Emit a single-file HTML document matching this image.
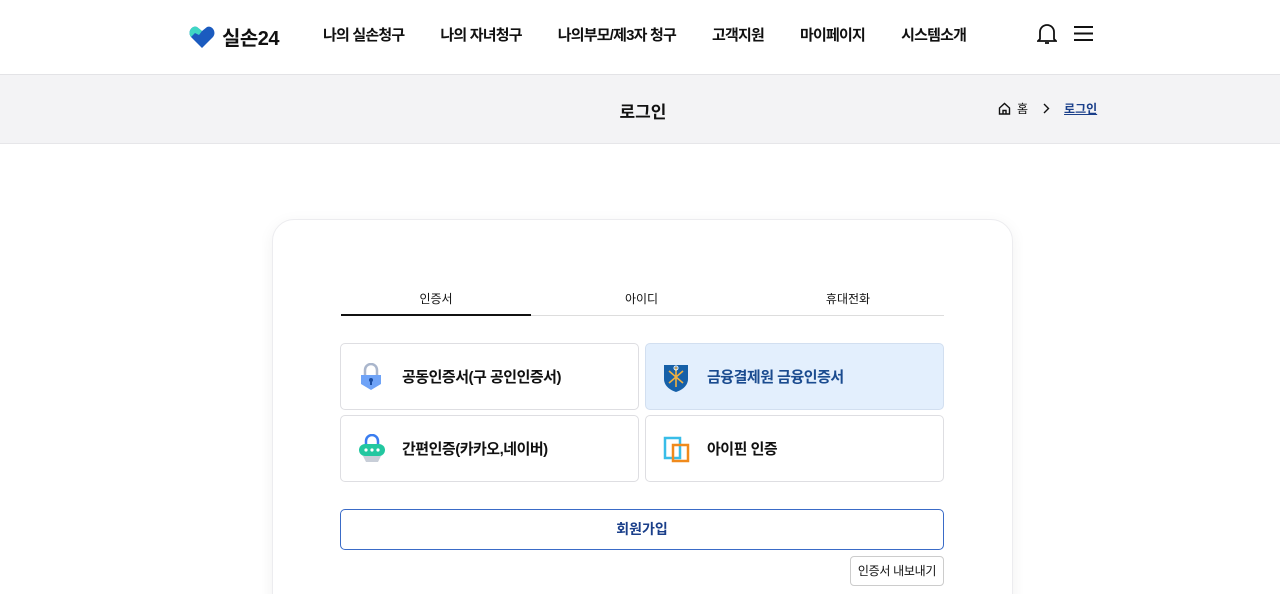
<!DOCTYPE html>
<html><head><meta charset="utf-8"><style>
*{margin:0;padding:0;box-sizing:border-box}
html,body{width:1280px;height:594px;overflow:hidden}
body{background:#fff;font-family:"Liberation Sans","Noto Sans CJK KR",sans-serif;color:#111;position:relative}
.hdr{height:75px;border-bottom:1px solid #e3e3e6;position:relative}
.logo{position:absolute;left:189px;top:22px;display:flex;align-items:center;gap:7px;font-size:20px;font-weight:700;letter-spacing:-0.5px}
.nav{position:absolute;top:24px;left:323px;font-size:15px;font-weight:700;display:flex;letter-spacing:-0.8px}
.nav span{margin-right:36px}
.sub{position:absolute;top:75px;left:0;width:1280px;height:69px;background:#f3f3f5;border-bottom:1px solid #e6e6e9}
.sub h1{position:absolute;left:3px;width:1280px;text-align:center;top:23px;font-size:17px}
.bc{position:absolute;left:998px;top:100px;font-size:12px;display:flex;align-items:center}
.clip{position:absolute;left:262px;top:209px;width:761px;height:385px;overflow:hidden}
.card{position:absolute;left:10px;top:10px;width:741px;height:420px;border:1px solid #ececef;border-radius:22px;box-shadow:0 4px 16px rgba(0,0,0,.06);background:#fff}
.tabs{position:absolute;left:341px;top:290px;width:603px;height:26px;border-bottom:1px solid #ddd;display:flex;font-size:12px}
.tabs div{text-align:center}
.tabs .on{border-bottom:2px solid #111;height:26px}
.opt{position:absolute;width:299px;height:67px;border:1px solid #dedee2;border-radius:5px;display:flex;align-items:center;padding-left:19px;font-size:15px;font-weight:700;letter-spacing:-0.5px}
.ic{width:42px;display:flex;align-items:center}
.join{position:absolute;left:340px;top:509px;width:604px;height:41px;border:1px solid #3a6bc7;border-radius:5px;text-align:center;line-height:39px;color:#1a3f8a;font-size:14px;font-weight:700}
.exp{position:absolute;left:850px;top:556px;width:94px;height:30px;border:1px solid #ccc;border-radius:4px;font-size:12px;text-align:center;line-height:28px;letter-spacing:-0.3px}
</style></head><body>
<div class="hdr">
<div class="logo"><svg width="26" height="24" viewBox="0 0 26 24"><path d="M13 23 L2 12 C-2 7 3 0 8 2 L13 6 L18 2 C23 0 28 7 24 12 Z" fill="#1b5bbf"/><path d="M2 12 C-2 7 3 0 8 2 L13 6 L10 10 L6 8 Z" fill="#3fd7c4"/></svg>실손24</div>
<div class="nav"><span>나의 실손청구</span><span>나의 자녀청구</span><span>나의부모/제3자 청구</span><span>고객지원</span><span>마이페이지</span><span>시스템소개</span></div>
<svg style="position:absolute;left:1037px;top:23px" width="20" height="22" viewBox="0 0 20 22" fill="none" stroke="#111" stroke-width="1.8"><path d="M3 16 V9 a7 7 0 0 1 14 0 V16 l2 2 H1 Z"/><path d="M8 20 h4"/></svg>
<svg style="position:absolute;left:1074px;top:26px" width="19" height="15" viewBox="0 0 19 15" stroke="#111" stroke-width="2"><path d="M0 1h19M0 7.5h19M0 14h19"/></svg>
</div>
<div class="sub"><h1>로그인</h1></div>
<div class="bc"><svg width="13" height="13" viewBox="0 0 13 13" fill="none" stroke="#111" stroke-width="1.4"><path d="M1.5 6 L6.5 1.5 L11.5 6 V12 H1.5 Z M5 12 V8.5 H8 V12"/></svg><span style="margin-left:6px">홈</span><svg style="margin-left:15px" width="7" height="11" viewBox="0 0 7 11" fill="none" stroke="#111" stroke-width="1.4"><path d="M1 1 L5.5 5.5 L1 10"/></svg><span style="margin-left:14px;color:#1a3f8a;font-weight:700;text-decoration:underline">로그인</span></div>
<div class="clip"><div class="card"></div></div>
<div class="tabs"><div class="on" style="width:190px">인증서</div><div style="width:221px">아이디</div><div style="width:192px">휴대전화</div></div>
<div class="opt" style="left:340px;top:343px"><div class="ic"><svg width="22" height="28" viewBox="0 0 22 28"><path d="M5 12 V7 a6 6 0 0 1 12 0 V12" fill="none" stroke="#aab6cc" stroke-width="2.5"/><path d="M1 12 h20 v9 l-10 6 l-10 -6 z" fill="#6fa3f7"/><circle cx="11" cy="17" r="2" fill="#1a4b9f"/><rect x="10" y="17" width="2" height="5" fill="#1a4b9f"/></svg></div>공동인증서(구 공인인증서)</div>
<div class="opt" style="left:645px;top:343px;background:#e3effd;border-color:#d2dff0;color:#1a4b8f;padding-left:17px"><div class="ic" style="width:44px"><svg width="26" height="30" viewBox="0 0 26 30"><path d="M1 3 h24 v14 c0 7 -6 11 -12 13 c-6 -2 -12 -6 -12 -13 z" fill="#1660a8"/><path d="M13 5 v20 M6 9 l14 12 M20 9 L6 21" stroke="#f0b040" stroke-width="1.6"/><circle cx="13" cy="6" r="2" fill="none" stroke="#fff"/></svg></div>금융결제원 금융인증서</div>
<div class="opt" style="left:340px;top:415px;padding-left:17px"><div class="ic" style="width:44px"><svg width="28" height="30" viewBox="0 0 28 30"><path d="M8 10 V7 a6 6 0 0 1 12 0 V10" fill="none" stroke="#3a7df0" stroke-width="2.5"/><rect x="1" y="10" width="26" height="12" rx="6" fill="#22c7a0"/><path d="M5 22 h18 l-3 6 h-12 z" fill="#c8ced8"/><circle cx="8" cy="16" r="1.6" fill="#fff"/><circle cx="14" cy="16" r="1.6" fill="#fff"/><circle cx="20" cy="16" r="1.6" fill="#fff"/></svg></div>간편인증(카카오,네이버)</div>
<div class="opt" style="left:645px;top:415px;padding-left:17px"><div class="ic" style="width:44px"><svg width="28" height="28" viewBox="0 0 28 28"><path d="M2 3 h15 v20 h-15 z" fill="none" stroke="#38bde8" stroke-width="2.5"/><path d="M10 10 h15 v16 h-15 z" fill="none" stroke="#f08a1c" stroke-width="2.5"/></svg></div>아이핀 인증</div>
<div class="join">회원가입</div>
<div class="exp">인증서 내보내기</div>
</body></html>
